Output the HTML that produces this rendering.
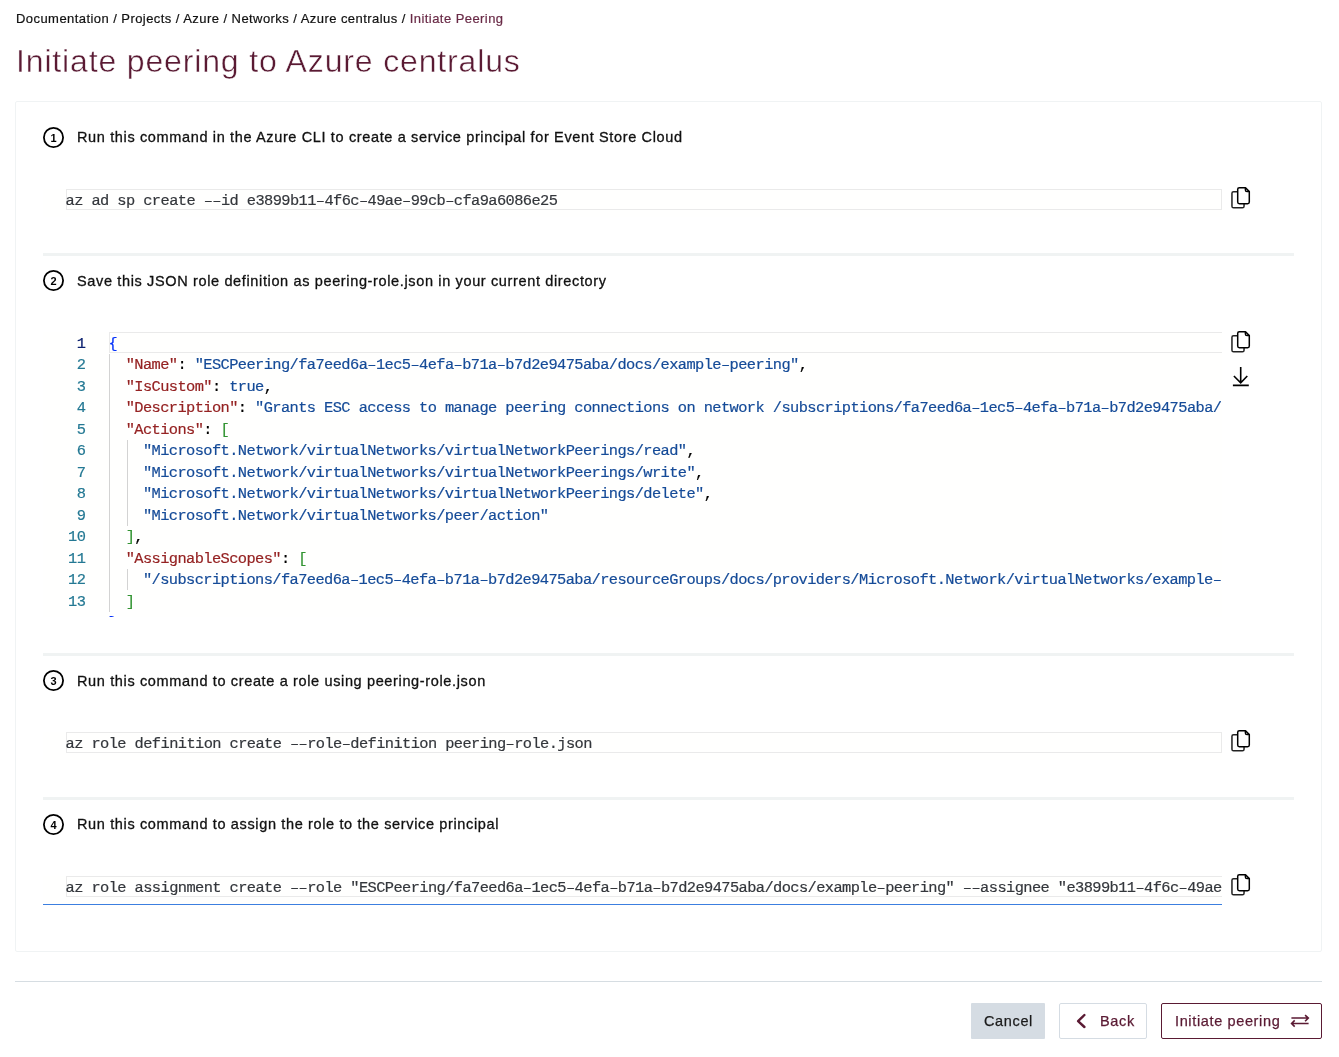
<!DOCTYPE html>
<html><head><meta charset="utf-8">
<style>
*{box-sizing:border-box;margin:0;padding:0}
html,body{width:1339px;height:1057px;background:#fff;overflow:hidden;position:relative}
body{font-family:"Liberation Sans",sans-serif;color:#1b1b1b}
.abs{position:absolute}
.crumb{left:16px;top:11px;font-size:13px;line-height:15px;letter-spacing:0.44px;white-space:nowrap;color:#111;-webkit-text-stroke:0.2px currentColor}
.crumb .cur{color:#6a2b47}
.title{left:16px;top:43px;font-size:32px;line-height:36px;letter-spacing:0.85px;white-space:nowrap;color:#5a1a33;-webkit-text-stroke:0.45px #fff}
.card{left:15px;top:101px;width:1307px;height:851px;border:1px solid #f0f3f4;border-radius:2px;background:#fff}
.sep{left:43px;width:1251px;height:3px;background:#f0f3f3}
.circ{left:43px;width:21px;height:21px;border:1.8px solid #000;border-radius:50%;font-size:11px;font-weight:bold;text-align:center;line-height:17.5px;color:#000}
.stxt{left:77px;font-size:14.5px;line-height:16px;letter-spacing:0.64px;white-space:nowrap;color:#111;-webkit-text-stroke:0.3px #111}
.ed{left:43px;width:1179px;background:#fffffe;overflow:hidden}
.cl{position:absolute;left:23px;top:0;width:1156px;height:21px;border:1px solid #eaeaea}
.code{position:absolute;font-family:"Liberation Mono",monospace;font-size:15.37px;letter-spacing:-0.5895px;-webkit-text-stroke:0.2px currentColor;line-height:21.5px;white-space:pre;color:#34373c}
.lnum{position:absolute;font-family:"Liberation Mono",monospace;font-size:15.37px;letter-spacing:-0.6px;-webkit-text-stroke:0.2px currentColor;line-height:21.5px;text-align:right;width:43px;left:0;color:#237893}
.k{color:#952222}.s{color:#154b98}.b1{color:#0431fa}.b2{color:#319331}.p{color:#000}
.guide{position:absolute;width:1px;background:#d3d3d3}
.btn{top:1003px;height:36px;font-size:14.5px;letter-spacing:0.64px;border-radius:2px;white-space:nowrap;-webkit-text-stroke:0.25px currentColor}
</style></head><body><div id="wrap" style="position:absolute;left:0;top:0;width:1339px;height:1057px;will-change:transform">
<div class="abs crumb">Documentation / Projects / Azure / Networks / Azure centralus / <span class="cur">Initiate Peering</span></div>
<div class="abs title">Initiate peering to Azure centralus</div>

<div class="abs card"></div>

<!-- step 1 -->
<svg class="abs" style="left:42px;top:126px" width="23" height="23" viewBox="0 0 23 23"><circle cx="11.5" cy="11.5" r="9.6" fill="none" stroke="#000" stroke-width="1.8"/><text x="11.5" y="15.6" text-anchor="middle" font-family="Liberation Sans" font-weight="bold" font-size="11">1</text></svg>
<div class="abs stxt" style="top:129px">Run this command in the Azure CLI to create a service principal for Event Store Cloud</div>
<div class="abs ed" style="top:189px;height:28px">
  <div class="cl"></div>
  <div class="code" style="left:22.6px;top:2px">az ad sp create ––id e3899b11–4f6c–49ae–99cb–cfa9a6086e25</div>
</div>
<svg class="abs" style="left:1229px;top:185px" width="24" height="26" viewBox="1229 185 24 26"><g fill="#fff" stroke="#000" stroke-width="1.5" stroke-linejoin="round">
      <rect x="1231.95" y="191.75" width="12.1" height="16.05" rx="1.6" stroke="#222"/>
      <path d="M1239.3 187.75 H1245.5 L1249.3 191.6 V202.1 Q1249.3 203.75 1247.7 203.75 H1239.3 Q1237.7 203.75 1237.7 202.1 V189.35 Q1237.7 187.75 1239.3 187.75 Z"/>
      <path d="M1245.4 187.75 V190 Q1245.4 191.6 1247 191.6 H1249.3" fill="none"/>
    </g></svg>
<div class="abs sep" style="top:253px"></div>

<!-- step 2 -->
<svg class="abs" style="left:42px;top:269px" width="23" height="23" viewBox="0 0 23 23"><circle cx="11.5" cy="11.5" r="9.6" fill="none" stroke="#000" stroke-width="1.8"/><text x="11.5" y="15.6" text-anchor="middle" font-family="Liberation Sans" font-weight="bold" font-size="11">2</text></svg>
<div class="abs stxt" style="top:273px">Save this JSON role definition as peering-role.json in your current directory</div>
<div class="abs ed" style="top:332px;height:285px">
  <div class="cl" style="left:66px;width:1300px"></div>
  <div class="lnum" style="top:1.5px;width:42.3px">
    <div style="color:#0b216f">1</div><div>2</div><div>3</div><div>4</div><div>5</div><div>6</div><div>7</div><div>8</div><div>9</div><div>10</div><div>11</div><div>12</div><div>13</div><div>14</div>
  </div>
  <div class="guide" style="left:66px;top:21.5px;height:258px"></div>
  <div class="guide" style="left:83.5px;top:107.5px;height:86px"></div>
  <div class="guide" style="left:83.5px;top:236.5px;height:21.5px"></div>
  <div style="position:absolute;left:0;top:0;width:1177.6px;height:285px;overflow:hidden"><div class="code" style="left:65.4px;top:1.5px"><span class="b1">{</span>
  <span class="k">"Name"</span><span class="p">: </span><span class="s">"ESCPeering/fa7eed6a–1ec5–4efa–b71a–b7d2e9475aba/docs/example–peering"</span><span class="p">,</span>
  <span class="k">"IsCustom"</span><span class="p">: </span><span class="s">true</span><span class="p">,</span>
  <span class="k">"Description"</span><span class="p">: </span><span class="s">"Grants ESC access to manage peering connections on network /subscriptions/fa7eed6a–1ec5–4efa–b71a–b7d2e9475aba/resourceGroups/docs/providers/Microsoft.Network/virtualNetworks/example–peering"</span><span class="p">,</span>
  <span class="k">"Actions"</span><span class="p">: </span><span class="b2">[</span>
    <span class="s">"Microsoft.Network/virtualNetworks/virtualNetworkPeerings/read"</span><span class="p">,</span>
    <span class="s">"Microsoft.Network/virtualNetworks/virtualNetworkPeerings/write"</span><span class="p">,</span>
    <span class="s">"Microsoft.Network/virtualNetworks/virtualNetworkPeerings/delete"</span><span class="p">,</span>
    <span class="s">"Microsoft.Network/virtualNetworks/peer/action"</span>
  <span class="b2">]</span><span class="p">,</span>
  <span class="k">"AssignableScopes"</span><span class="p">: </span><span class="b2">[</span>
    <span class="s">"/subscriptions/fa7eed6a–1ec5–4efa–b71a–b7d2e9475aba/resourceGroups/docs/providers/Microsoft.Network/virtualNetworks/example–peering"</span>
  <span class="b2">]</span>
<span class="b1">}</span></div></div>
</div>
<svg class="abs" style="left:1229px;top:329px" width="24" height="26" viewBox="1229 185 24 26"><g fill="#fff" stroke="#000" stroke-width="1.5" stroke-linejoin="round">
      <rect x="1231.95" y="191.75" width="12.1" height="16.05" rx="1.6" stroke="#222"/>
      <path d="M1239.3 187.75 H1245.5 L1249.3 191.6 V202.1 Q1249.3 203.75 1247.7 203.75 H1239.3 Q1237.7 203.75 1237.7 202.1 V189.35 Q1237.7 187.75 1239.3 187.75 Z"/>
      <path d="M1245.4 187.75 V190 Q1245.4 191.6 1247 191.6 H1249.3" fill="none"/>
    </g></svg>
<svg class="abs" style="left:1230px;top:365px" width="22" height="22" viewBox="0 0 22 22"><path d="M10.7 2 V18.3 M3.9 11 L10.7 17.8 L17.3 11 M2.9 20.4 H18.8" fill="none" stroke="#000" stroke-width="1.6"/></svg>
<div class="abs sep" style="top:653px"></div>

<!-- step 3 -->
<svg class="abs" style="left:42px;top:669px" width="23" height="23" viewBox="0 0 23 23"><circle cx="11.5" cy="11.5" r="9.6" fill="none" stroke="#000" stroke-width="1.8"/><text x="11.5" y="15.6" text-anchor="middle" font-family="Liberation Sans" font-weight="bold" font-size="11">3</text></svg>
<div class="abs stxt" style="top:673px">Run this command to create a role using peering-role.json</div>
<div class="abs ed" style="top:732px;height:28px">
  <div class="cl"></div>
  <div class="code" style="left:22.6px;top:2px">az role definition create ––role–definition peering–role.json</div>
</div>
<svg class="abs" style="left:1229px;top:728px" width="24" height="26" viewBox="1229 185 24 26"><g fill="#fff" stroke="#000" stroke-width="1.5" stroke-linejoin="round">
      <rect x="1231.95" y="191.75" width="12.1" height="16.05" rx="1.6" stroke="#222"/>
      <path d="M1239.3 187.75 H1245.5 L1249.3 191.6 V202.1 Q1249.3 203.75 1247.7 203.75 H1239.3 Q1237.7 203.75 1237.7 202.1 V189.35 Q1237.7 187.75 1239.3 187.75 Z"/>
      <path d="M1245.4 187.75 V190 Q1245.4 191.6 1247 191.6 H1249.3" fill="none"/>
    </g></svg>
<div class="abs sep" style="top:797px"></div>

<!-- step 4 -->
<svg class="abs" style="left:42px;top:813px" width="23" height="23" viewBox="0 0 23 23"><circle cx="11.5" cy="11.5" r="9.6" fill="none" stroke="#000" stroke-width="1.8"/><text x="11.5" y="15.6" text-anchor="middle" font-family="Liberation Sans" font-weight="bold" font-size="11">4</text></svg>
<div class="abs stxt" style="top:816px">Run this command to assign the role to the service principal</div>
<div class="abs ed" style="top:876px;height:29px;border-bottom:1px solid #3c7fe0">
  <div class="cl" style="width:1300px"></div>
  <div class="code" style="left:22.6px;top:2px">az role assignment create ––role "ESCPeering/fa7eed6a–1ec5–4efa–b71a–b7d2e9475aba/docs/example–peering" ––assignee "e3899b11–4f6c–49ae–99cb–cfa9a6086e25"</div>
</div>
<svg class="abs" style="left:1229px;top:872px" width="24" height="26" viewBox="1229 185 24 26"><g fill="#fff" stroke="#000" stroke-width="1.5" stroke-linejoin="round">
      <rect x="1231.95" y="191.75" width="12.1" height="16.05" rx="1.6" stroke="#222"/>
      <path d="M1239.3 187.75 H1245.5 L1249.3 191.6 V202.1 Q1249.3 203.75 1247.7 203.75 H1239.3 Q1237.7 203.75 1237.7 202.1 V189.35 Q1237.7 187.75 1239.3 187.75 Z"/>
      <path d="M1245.4 187.75 V190 Q1245.4 191.6 1247 191.6 H1249.3" fill="none"/>
    </g></svg>

<!-- footer -->
<div class="abs" style="left:15px;top:981px;width:1307px;height:1px;background:#d6dde2"></div>
<div class="abs btn" style="left:971px;width:74px;background:#d5dce3;border-radius:1px"><span class="abs" style="left:13px;top:10px;line-height:16px">Cancel</span></div>
<div class="abs btn" style="left:1059px;width:88px;border:1px solid #d5dce3;background:#fff;color:#5a1a33">
  <svg class="abs" style="left:14px;top:7px" width="14" height="18" viewBox="0 0 14 18"><path d="M10.4 4 L4.1 10.1 L10.4 16" fill="none" stroke="#5a1a33" stroke-width="2.4" stroke-linecap="round" stroke-linejoin="round"/></svg>
  <span class="abs" style="left:40px;top:9px;line-height:16px">Back</span></div>
<div class="abs btn" style="left:1161px;width:161px;border:1px solid #5a1a33;background:#fff;color:#5a1a33">
  <span class="abs" style="left:13px;top:9px;line-height:16px">Initiate peering</span>
  <svg class="abs" style="left:128px;top:9px" width="22" height="16" viewBox="0 0 22 16"><path d="M1.4 5 H18.3 M15.1 2.1 L18.3 5 L15.1 8.2 M1.6 10.5 H18.6 M4.7 7.4 L1.6 10.5 L4.7 13.6" fill="none" stroke="#5a1a33" stroke-width="1.6"/></svg>
</div>

</div></body></html>
